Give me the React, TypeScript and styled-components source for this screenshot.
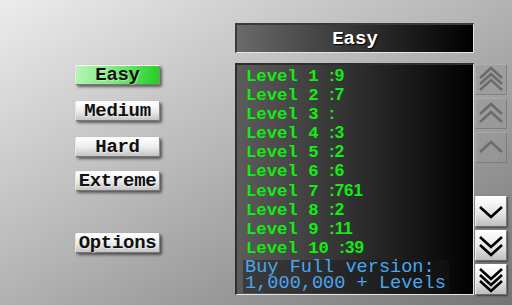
import React from 'react';
import styled, { createGlobalStyle } from 'styled-components';

const GlobalStyle = createGlobalStyle`
    html, body {
        margin: 0;
        padding: 0;
    }
    body {
        width: 512px;
        height: 305px;
        overflow: hidden;
        font-family: "Liberation Mono", monospace;
    }
`;

const Screen = styled.div`
    width: 512px;
    height: 305px;
    box-sizing: border-box;
    background: linear-gradient(150deg, #ececec 0%, #b8b8b8 45%, #747474 100%);
    display: flex;
    padding: 23px 0 0 75px;
    gap: 75px;
`;

const Menu = styled.div`
    display: flex;
    flex-direction: column;
    padding-top: 42px;
    width: 85px;
`;

const MenuButton = styled.div<{ $active?: boolean; $gap: number }>`
    margin-top: ${p => p.$gap}px;
    height: 20px;
    box-sizing: border-box;
    display: flex;
    align-items: center;
    justify-content: center;
    font-family: "Liberation Mono", monospace;
    font-weight: bold;
    font-size: 19px;
    letter-spacing: -0.3px;
    color: #111;
    text-shadow: 1px 1px 0 rgba(255, 255, 255, 0.4);
    border-top: 1px solid #fafafa;
    border-left: 1px solid #e8e8e8;
    border-right: 1px solid #8a8a8a;
    border-bottom: 1px solid #777;
    border-radius: 2px;
    box-shadow: 2px 2px 3px rgba(0, 0, 0, 0.55);
    background: ${p => p.$active
        ? 'linear-gradient(100deg, #b8f4b8 0%, #78e878 50%, #22cc22 100%)'
        : 'linear-gradient(180deg, #ffffff 0%, #ececec 50%, #c4c4c4 100%)'};
`;

const Board = styled.div`
    display: flex;
    flex-direction: column;
    gap: 10px;
`;

const Title = styled.div`
    width: 239px;
    height: 30px;
    box-sizing: border-box;
    border-top: 2px solid #3a3a3a;
    border-left: 2px solid #3a3a3a;
    border-right: 1px solid #e4e4e4;
    border-bottom: 1px solid #e4e4e4;
    background: linear-gradient(90deg, #6a6a6a 0%, #2a2a2a 60%, #000 100%);
    color: #fff;
    font-weight: bold;
    font-size: 19px;
    display: flex;
    align-items: center;
    justify-content: center;
    text-shadow: 1px 1px 1px #000;
`;

const Body = styled.div`
    display: flex;
    gap: 1px;
`;

const LevelPanel = styled.div`
    width: 239px;
    height: 232px;
    box-sizing: border-box;
    border-top: 2px solid #2e2e2e;
    border-left: 2px solid #2e2e2e;
    border-right: 1px solid #e4e4e4;
    border-bottom: 1px solid #e4e4e4;
    background: linear-gradient(90deg, #5c5c5c 0%, #2a2a2a 55%, #000 100%);
    padding: 1px 0 0 9px;
    display: flex;
    flex-direction: column;
`;

const LevelRow = styled.div`
    height: 19.1px;
    line-height: 19.1px;
    color: #11ee11;
    font-size: 17.3px;
    font-weight: bold;
    white-space: pre;
`;

const Score = styled.span`
    font-family: "Liberation Sans", Arial, sans-serif;
    font-size: 17px;
`;

const Promo = styled.div`
    margin: 3px 0 0 -3px;
    padding: 0 3px 0 2px;
    align-self: flex-start;
    background: rgba(25, 25, 25, 0.45);
    color: #4aa6ee;
    font-size: 18.6px;
    line-height: 16.5px;
    white-space: pre;
`;

const Scroller = styled.div`
    display: flex;
    flex-direction: column;
    gap: 3px;
    padding-top: 1px;
    width: 32px;
`;

const Spacer = styled.div`
    flex: 1;
`;

const ScrollButton = styled.div<{ $enabled?: boolean }>`
    width: 32px;
    height: 31px;
    box-sizing: border-box;
    display: flex;
    align-items: center;
    justify-content: center;
    border-radius: 1px;
    ${p => p.$enabled
        ? `
        background: linear-gradient(180deg, #ffffff 0%, #e6e6e6 55%, #bdbdbd 100%);
        border-top: 1px solid #fff;
        border-left: 1px solid #eee;
        border-right: 1px solid #7a7a7a;
        border-bottom: 1px solid #6a6a6a;
        box-shadow: 1px 1px 2px rgba(0, 0, 0, 0.5);
        color: #000;
        `
        : `
        background: rgba(150, 150, 150, 0.45);
        border: 1px solid rgba(200, 200, 200, 0.35);
        border-right-color: rgba(90, 90, 90, 0.4);
        border-bottom-color: rgba(90, 90, 90, 0.4);
        color: #6c6c6c;
        `}
`;

const Chevrons: React.FC<{ count: number; up?: boolean }> = ({ count, up }) => {
    const offsets = count === 1 ? [0] : count === 2 ? [-4, 4] : [-6, 0, 6];
    return (
        <svg width="30" height="29" viewBox="0 0 30 29">
            <g transform={up ? 'rotate(180 15 14.5)' : undefined} fill="none" stroke="currentColor" strokeWidth="2.6" strokeLinejoin="miter">
                {offsets.map(o => (
                    <polyline key={o} points={`4,${10 + o} 15,${20 + o} 26,${10 + o}`} />
                ))}
            </g>
        </svg>
    );
};

const levels: [number, string][] = [
    [1, '9'], [2, '7'], [3, ''], [4, '3'], [5, '2'],
    [6, '6'], [7, '761'], [8, '2'], [9, '11'], [10, '39'],
];

const App: React.FC = () => {
    return (
        <>
            <GlobalStyle />
            <Screen>
                <Menu>
                    <MenuButton $active $gap={0}>Easy</MenuButton>
                    <MenuButton $gap={16}>Medium</MenuButton>
                    <MenuButton $gap={16}>Hard</MenuButton>
                    <MenuButton $gap={14}>Extreme</MenuButton>
                    <MenuButton $gap={42}>Options</MenuButton>
                </Menu>
                <Board>
                    <Title>Easy</Title>
                    <Body>
                        <LevelPanel>
                            {levels.map(([n, s]) => (
                                <LevelRow key={n}>
                                    {`Level ${n} `}<Score>:{s}</Score>
                                </LevelRow>
                            ))}
                            <Promo>{'Buy Full version:\n1,000,000 + Levels'}</Promo>
                        </LevelPanel>
                        <Scroller>
                            <ScrollButton><Chevrons count={3} up /></ScrollButton>
                            <ScrollButton><Chevrons count={2} up /></ScrollButton>
                            <ScrollButton><Chevrons count={1} up /></ScrollButton>
                            <Spacer />
                            <ScrollButton $enabled><Chevrons count={1} /></ScrollButton>
                            <ScrollButton $enabled><Chevrons count={2} /></ScrollButton>
                            <ScrollButton $enabled><Chevrons count={3} /></ScrollButton>
                        </Scroller>
                    </Body>
                </Board>
            </Screen>
        </>
    );
};

export default App;
